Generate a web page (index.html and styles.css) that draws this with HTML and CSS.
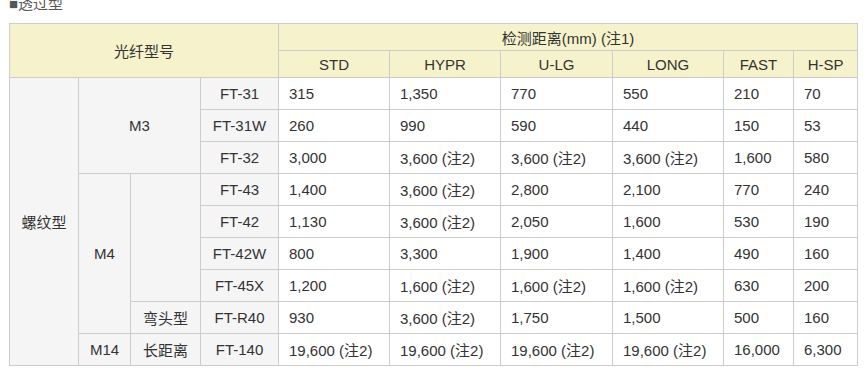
FILE: index.html
```html
<!DOCTYPE html>
<html lang="zh">
<head>
<meta charset="utf-8">
<link rel="stylesheet" href="styles.css">
</head>
<body>
<div class="page">
  <div class="title">■透过型</div>
  <table class="spec">
    <colgroup>
      <col class="c1"><col class="c2"><col class="c3"><col class="c4">
      <col class="c5"><col class="c6"><col class="c7"><col class="c8">
      <col class="c9"><col class="c10">
    </colgroup>
    <thead>
      <tr class="h1">
        <th colspan="4" rowspan="2">光纤型号</th>
        <th colspan="6">检测距离(mm) (注1)</th>
      </tr>
      <tr class="h2">
        <th>STD</th><th>HYPR</th><th>U-LG</th><th>LONG</th><th>FAST</th><th>H-SP</th>
      </tr>
    </thead>
    <tbody>
      <tr>
        <th rowspan="9">螺纹型</th>
        <th colspan="2" rowspan="3">M3</th>
        <th>FT-31</th>
        <td>315</td><td>1,350</td><td>770</td><td>550</td><td>210</td><td>70</td>
      </tr>
      <tr>
        <th>FT-31W</th>
        <td>260</td><td>990</td><td>590</td><td>440</td><td>150</td><td>53</td>
      </tr>
      <tr>
        <th>FT-32</th>
        <td>3,000</td><td>3,600 (注2)</td><td>3,600 (注2)</td><td>3,600 (注2)</td><td>1,600</td><td>580</td>
      </tr>
      <tr>
        <th rowspan="5">M4</th>
        <th rowspan="4"></th>
        <th>FT-43</th>
        <td>1,400</td><td>3,600 (注2)</td><td>2,800</td><td>2,100</td><td>770</td><td>240</td>
      </tr>
      <tr>
        <th>FT-42</th>
        <td>1,130</td><td>3,600 (注2)</td><td>2,050</td><td>1,600</td><td>530</td><td>190</td>
      </tr>
      <tr>
        <th>FT-42W</th>
        <td>800</td><td>3,300</td><td>1,900</td><td>1,400</td><td>490</td><td>160</td>
      </tr>
      <tr>
        <th>FT-45X</th>
        <td>1,200</td><td>1,600 (注2)</td><td>1,600 (注2)</td><td>1,600 (注2)</td><td>630</td><td>200</td>
      </tr>
      <tr>
        <th>弯头型</th>
        <th>FT-R40</th>
        <td>930</td><td>3,600 (注2)</td><td>1,750</td><td>1,500</td><td>500</td><td>160</td>
      </tr>
      <tr>
        <th>M14</th>
        <th>长距离</th>
        <th>FT-140</th>
        <td>19,600 (注2)</td><td>19,600 (注2)</td><td>19,600 (注2)</td><td>19,600 (注2)</td><td>16,000</td><td>6,300</td>
      </tr>
    </tbody>
  </table>
</div>
</body>
</html>
```

FILE: styles.css
```css
html, body {
  margin: 0;
  padding: 0;
  background: #fff;
}
.page {
  padding-left: 9px;
  font-family: "Liberation Sans", "Noto Sans CJK SC", sans-serif;
  color: #333;
  overflow: hidden;
  height: 378px;
}
.title {
  margin-top: -4px;
  height: 27px;
  font-size: 15px;
  line-height: 16px;
  color: #555;
}
.spec {
  border-collapse: collapse;
  table-layout: fixed;
  width: 848px;
  font-size: 15px;
}
.spec th, .spec td {
  border: 1px solid #cccccc;
  padding: 0;
  font-weight: normal;
}
.spec thead th {
  background: #f6f3cc;
  text-align: center;
}
.spec tbody th {
  background: #f5f5f5;
  text-align: center;
}
.spec td {
  background: #fff;
  text-align: left;
  padding-left: 10px;
}
.h1, .h2 { height: 27px; }
.spec tbody tr { height: 32px; }
.c1 { width: 69px; }
.c2 { width: 52px; }
.c3 { width: 70px; }
.c4 { width: 78px; }
.c5 { width: 111px; }
.c6 { width: 111px; }
.c7 { width: 112px; }
.c8 { width: 111px; }
.c9 { width: 70px; }
.c10 { width: 64px; }
```
